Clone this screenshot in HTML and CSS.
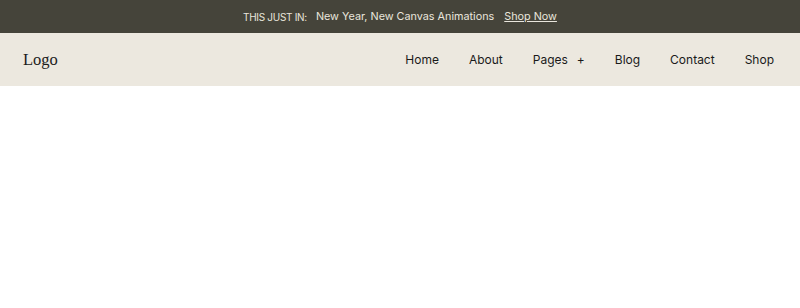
FILE: index.html
```html
<!DOCTYPE html>
<html lang="en">
  <head>
    <meta charset="UTF-8" />
    <meta name="viewport" content="width=device-width, initial-scale=1.0" />
    <title>Header</title>
    <link rel="stylesheet" href="styles.css">
  </head>
  <body>
    <div class="announce">
      <span class="announce-label">THIS JUST IN:</span>
      <span class="announce-text">New Year, New Canvas Animations</span>
      <a class="announce-link" href="#">Shop Now</a>
    </div>
    <header class="nav">
      <div class="logo">Logo</div>
      <nav class="menu">
        <a href="#">Home</a>
        <a href="#">About</a>
        <a href="#" class="has-sub">Pages<span class="plus">+</span></a>
        <a href="#">Blog</a>
        <a href="#">Contact</a>
        <a href="#">Shop</a>
      </nav>
    </header>
  </body>
</html>
```

FILE: styles.css
```css
body {
  margin: 0;
  background-color: #fff;
  font-family: "Inter", "Open Sans", sans-serif;
}
.announce {
  background-color: #45443a;
  color: #e9e6dd;
  height: 33px;
  display: flex;
  justify-content: center;
  align-items: center;
  gap: 9px;
  font-size: 10.8px;
}
.announce-label {
  font-size: 10px;
  letter-spacing: -0.3px;
}
.announce-link {
  color: #e9e6dd;
  text-decoration: underline;
  margin-left: 1px;
}
.nav {
  background-color: #ece8df;
  height: 53px;
  display: flex;
  align-items: center;
  justify-content: space-between;
  padding: 0 26px 0 23px;
}
.logo {
  font-family: "Liberation Serif", serif;
  font-size: 16.5px;
  color: #1c1c1c;
}
.menu {
  display: flex;
  gap: 30px;
}
.menu a {
  color: #1a1a1a;
  text-decoration: none;
  font-size: 12px;
}
.plus {
  margin-left: 9px;
}
```
